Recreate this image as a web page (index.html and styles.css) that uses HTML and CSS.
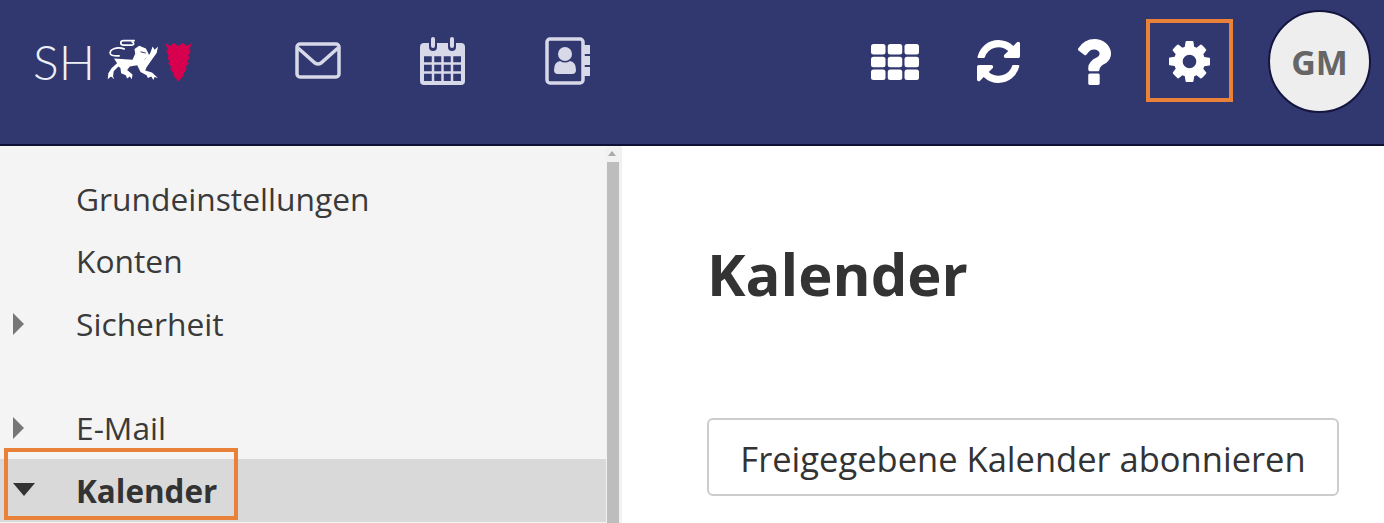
FILE: index.html
```html
<!DOCTYPE html>
<html lang="de">
<head>
    <meta charset="UTF-8">
    <meta name="viewport" content="width=device-width, initial-scale=1.0">
    <title>Einstellungen - Kalender</title>
    <link rel="stylesheet" href="styles.css">
</head>
<body>
    <header class="topbar">
        <div class="logo">
            <span class="logo-text">SH</span>
            <svg class="logo-lion" viewBox="262 40 155 125" width="52" height="42">
                <path d="M345 45H312C300 45 300 58 312 58H335C345 58 342 48 335 49M315 70C290 60 268 72 272 84C275 92 290 90 300 90" fill="none" stroke="#fff" stroke-width="5"/>
                <path d="M283 98L338 102 346 84 344 70 358 60 378 68 388 88 376 98 372 104 390 84 398 62 404 72 414 62 410 82 394 104 380 124 376 134 396 140 414 156 404 153 400 162 394 152 384 156 380 148 362 138 352 118 330 122 322 132 338 146 336 160 330 152 322 158 318 148 304 142 302 126 296 122 282 136 280 152 284 160 274 152 264 160 266 142 276 126 292 112z" fill="#fff"/>
                <path d="M362 78L378 82" stroke="#31376f" stroke-width="3"/>
            </svg>
            <svg class="logo-leaf" viewBox="0 0 27 39" width="27" height="39">
                <path d="M0 1L5 4 9 1 13 4 18 1 22 4 27 1 24 8 26 9 23 14 25 15 22 20 24 21 20 26 22 27 18 32 19 33 14 39 13 39 8 33 9 32 5 27 7 26 3 21 5 20 2 15 4 14 1 9 3 8z" fill="#d6004f"/>
            </svg>
        </div>
        <nav class="nav-icons">
            <svg class="icon-pale" viewBox="0 0 46 37" width="46" height="37">
                <rect x="2" y="2" width="42" height="33" rx="3" fill="none" stroke="#d8d9e8" stroke-width="3.5"/>
                <path d="M3 6l17 15q3 2 6 0l17-15" fill="none" stroke="#d8d9e8" stroke-width="3.5"/>
            </svg>
            <svg class="icon-pale" viewBox="0 0 45 48" width="45" height="48">
                <path d="M4 6h5v4a4 4 0 0 0 8 0V6h11v4a4 4 0 0 0 8 0V6h5a4 4 0 0 1 4 4v34a4 4 0 0 1-4 4H4a4 4 0 0 1-4-4V10a4 4 0 0 1 4-4z" fill="#d8d9e8"/>
                <rect x="11" y="0" width="4" height="11" rx="2" fill="#d8d9e8"/>
                <rect x="30" y="0" width="4" height="11" rx="2" fill="#d8d9e8"/>
                <path d="M4 18h37v26H4z" fill="#31376f"/>
                <path d="M4 18h37M4 26.500h37M4 35.500h37M13 18v26M22.500 18v26M32 18v26" stroke="#d8d9e8" stroke-width="2.500" fill="none"/>
            </svg>
            <svg class="icon-pale" viewBox="0 0 45 48" width="45" height="48">
                <rect x="2" y="2" width="36" height="44" rx="3" fill="none" stroke="#d8d9e8" stroke-width="3.5"/>
                <path d="M39 8h6v9h-6zM39 19h6v9h-6zM39 30h6v9h-6z" fill="#d8d9e8"/>
                <circle cx="20" cy="17" r="7" fill="#d8d9e8"/>
                <path d="M9 33q0-8 6-9 5 3 10 0 6 1 6 9 0 4-4 4H13q-4 0-4-4z" fill="#d8d9e8"/>
            </svg>
        </nav>
        <div class="tools">
            <svg viewBox="0 0 48 36" width="48" height="36" fill="#fff">
                <rect x="0" y="0" width="14.500" height="10.500" rx="2.500"/>
                <rect x="16.750" y="0" width="14.500" height="10.500" rx="2.500"/>
                <rect x="33.500" y="0" width="14.500" height="10.500" rx="2.500"/>
                <rect x="0" y="12.750" width="14.500" height="10.500" rx="2.500"/>
                <rect x="16.750" y="12.750" width="14.500" height="10.500" rx="2.500"/>
                <rect x="33.500" y="12.750" width="14.500" height="10.500" rx="2.500"/>
                <rect x="0" y="25.500" width="14.500" height="10.500" rx="2.500"/>
                <rect x="16.750" y="25.500" width="14.500" height="10.500" rx="2.500"/>
                <rect x="33.500" y="25.500" width="14.500" height="10.500" rx="2.500"/>
            </svg>
            <svg viewBox="128 128 1536 1536" width="43" height="43" fill="#fff">
                <path d="M1639 1056q0 5-1 7-64 268-268 434.500t-478 166.500q-146 0-282.500-55t-243.500-157l-129 129q-19 19-45 19t-45-19-19-45v-448q0-26 19-45t45-19h448q26 0 45 19t19 45-19 45l-137 137q71 66 161 102t187 36q134 0 250-65t186-179q11-17 53-117 8-23 30-23h192q13 0 22.500 9.500t9.500 22.500zm25-800v448q0 26-19 45t-45 19h-448q-26 0-45-19t-19-45 19-45l138-138q-148-137-349-137-134 0-250 65t-186 179q-11 17-53 117-8 23-30 23h-199q-13 0-22.500-9.500t-9.500-22.500v-7q65-268 270-434.500t480-166.500q146 0 284 55.500t245 156.500l130-129q19-19 45-19t45 19 19 45z"/>
            </svg>
            <svg viewBox="417 375 923 1280" width="33" height="46" fill="#fff" preserveAspectRatio="none">
                <path d="M1024 1375v240q0 16-12 28t-28 12h-240q-16 0-28-12t-12-28v-240q0-16 12-28t28-12h240q16 0 28 12t12 28zm316-600q0 54-15.500 101t-35 76.500-55 59.500-57.500 43.500-61 35.500q-41 23-68.500 65t-27.500 67q0 17-12 32.500t-28 15.500h-240q-15 0-25.500-18.500t-10.500-37.500v-45q0-83 65-156.500t143-108.500q59-27 84-56t25-76q0-42-46.500-74t-107.500-32q-65 0-108 29-35 25-107 115-13 16-31 16-12 0-25-8l-164-125q-13-10-15.500-25t5.500-28q160-266 464-266 80 0 161 31t146 83 106 127.500 41 158.500z"/>
            </svg>
            <span class="gear">
                <svg viewBox="128 128 1536 1536" width="41" height="41" fill="#fff">
                    <path d="M1152 896q0-106-75-181t-181-75-181 75-75 181 75 181 181 75 181-75 75-181zm512-109v222q0 12-8 23t-20 13l-185 28q-19 54-39 91 35 50 107 138 10 12 10 25t-9 23q-27 37-99 108t-94 71q-12 0-26-9l-138-108q-44 23-91 38-16 136-29 186-7 28-36 28h-222q-14 0-24.500-8.500t-11.500-21.500l-28-184q-49-16-90-37l-141 107q-10 9-25 9-14 0-25-11-126-114-165-168-7-10-7-23 0-12 8-23 15-21 51-66.500t54-70.500q-27-50-41-99l-183-27q-13-2-21-12.500t-8-23.500v-222q0-12 8-23t19-13l186-28q14-46 39-92-40-57-107-138-10-12-10-24 0-10 9-23 26-36 98.500-107.500t94.500-71.500q13 0 26 10l138 107q44-23 91-38 16-136 29-186 7-28 36-28h222q14 0 24.500 8.500t11.500 21.500l28 184q49 16 90 37l142-107q9-9 24-9 13 0 25 10 129 119 165 170 7 8 7 22 0 12-8 23-15 21-51 66.500t-54 70.500q26 50 41 98l183 28q13 2 21 12.500t8 23.500z"/>
                </svg>
            </span>
            <div class="avatar">GM</div>
        </div>
    </header>

    <div class="content">
        <aside class="sidebar">
            <ul class="menu">
                <li class="menu-item">Grundeinstellungen</li>
                <li class="menu-item">Konten</li>
                <li class="menu-item closed">Sicherheit</li>
                <li class="menu-item closed group-start">E-Mail</li>
                <li class="menu-item open active">Kalender</li>
            </ul>
            <div class="scrollbar">
                <span class="scroll-up"></span>
                <span class="scroll-thumb"></span>
            </div>
        </aside>
        <main class="main">
            <h1>Kalender</h1>
            <button class="btn">Freigegebene Kalender abonnieren</button>
        </main>
    </div>
</body>
</html>
```

FILE: styles.css
```css
*, *::before, *::after {
    margin: 0;
    padding: 0;
    box-sizing: border-box;
    font-family: 'Open Sans', 'Liberation Sans', sans-serif;
}

html, body {
    height: 523px;
    overflow: hidden;
}

body {
    background-color: white;
    color: #333;
    display: flex;
    flex-direction: column;
}

/* top bar */

.topbar {
    flex: none;
    height: 146px;
    padding: 0 13px 21px 33px;
    display: flex;
    align-items: center;
    background-color: #31376f;
    border-bottom: 2px solid #0e1035;
}

.logo {
    display: flex;
    align-items: flex-end;
    margin-right: 103px;
}

.logo-text {
    font-family: 'Lato', sans-serif;
    font-weight: 300;
    font-size: 48px;
    line-height: 1;
    color: #eef0f7;
    margin-right: 12px;
}

.logo-lion {
    margin: 0 6px 5px 0;
}

.logo-leaf {
    margin-bottom: 5px;
}

.nav-icons {
    display: flex;
    align-items: center;
    gap: 79.5px;
    margin-bottom: 2px;
}

.tools {
    margin-left: auto;
    display: flex;
    align-items: center;
    gap: 58px;
}

.nav-icons svg,
.tools svg {
    display: block;
}

.gear {
    position: relative;
    display: block;
}

.gear::after {
    content: "";
    position: absolute;
    left: -23px;
    top: -22px;
    width: 87px;
    height: 83px;
    border: 4px solid #ea8139;
}

.avatar {
    width: 103px;
    height: 103px;
    border-radius: 50%;
    border: 2px solid #141640;
    background-color: #eee;
    color: #666;
    font-size: 34px;
    font-weight: 700;
    display: flex;
    align-items: center;
    justify-content: center;
}

/* sidebar */

.content {
    flex: 1;
    display: flex;
    min-height: 0;
}

.sidebar {
    flex: none;
    width: 622px;
    display: flex;
    background-color: #f4f4f4;
}

.menu {
    flex: 1;
    list-style: none;
    padding-top: 22px;
}

.menu-item {
    position: relative;
    height: 62.4px;
    padding-left: 76px;
    font-size: 31.75px;
    line-height: 61px;
    color: #3a3a3a;
}

.group-start {
    margin-top: 41.6px;
}

.closed::before {
    content: "";
    position: absolute;
    left: 13px;
    top: 20px;
    border-left: 11px solid #777;
    border-top: 11px solid transparent;
    border-bottom: 11px solid transparent;
}

.open::before {
    content: "";
    position: absolute;
    left: 13px;
    top: 24px;
    border-top: 13px solid #333;
    border-left: 11px solid transparent;
    border-right: 11px solid transparent;
}

.active {
    background-color: #d9d9d9;
    font-size: 31.4px;
    line-height: 63px;
    font-weight: 700;
    color: #333;
}

.active::after {
    content: "";
    position: absolute;
    left: 4px;
    top: -11px;
    width: 234px;
    height: 72px;
    border: 4px solid #ea8139;
}

.scrollbar {
    flex: none;
    width: 16px;
    position: relative;
    background-color: #f1f1f1;
}

.scroll-up {
    position: absolute;
    left: 2px;
    top: 5px;
    border-bottom: 5px solid #aaa;
    border-left: 4px solid transparent;
    border-right: 4px solid transparent;
}

.scroll-thumb {
    position: absolute;
    left: 1px;
    top: 16px;
    bottom: 0;
    width: 12px;
    background-color: #bdbdbd;
}

/* main */

.main {
    flex: 1;
    padding: 88px 45px 0 85px;
}

h1 {
    font-size: 58px;
    font-weight: 700;
    line-height: 80px;
    color: #333;
    margin-bottom: 104px;
}

.btn {
    display: block;
    width: 632px;
    height: 78px;
    padding-top: 3px;
    background-color: white;
    border: 2px solid #ccc;
    border-radius: 6px;
    font-size: 34.5px;
    color: #333;
    text-align: center;
}
```
